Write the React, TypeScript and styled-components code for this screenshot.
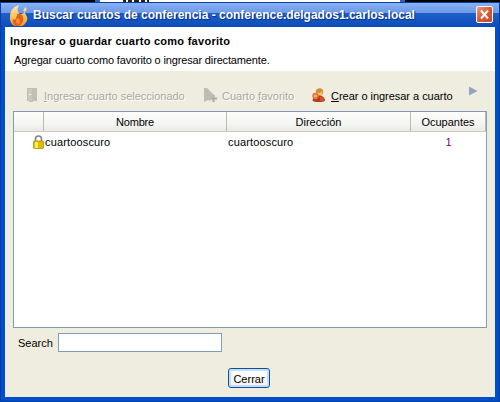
import React from 'react';
import styled, { createGlobalStyle } from 'styled-components';

const Global = createGlobalStyle`
  * { box-sizing: border-box; }
  body { margin: 0; overflow: hidden; font: 11px/14px "Liberation Sans", Arial, sans-serif; color: #000; }
`;

const Screen = styled.div`
  width: 500px;
  height: 402px;
  display: flex;
  flex-direction: column;
`;

const Behind = styled.div`
  height: 2px;
  flex: none;
  display: flex;
  background: #000;
`;
const BehindWindow = styled.div`
  margin-left: 95px;
  width: 310px;
  height: 2px;
  border: solid #2a5fc4;
  border-width: 0 5px;
  background: #fff;
  padding-left: 23px;
  display: flex;
  gap: 2px;
`;
const Speck = styled.i<{ $w: number }>`
  width: ${p => p.$w}px;
  height: 2px;
  background: #222;
`;

const Frame = styled.div`
  flex: 1;
  min-height: 0;
  display: flex;
  flex-direction: column;
  background: #004fc8;
  border: solid #003da5;
  border-width: 0 1px 1px;
  padding: 0 4px 4px;
`;

const TitleBar = styled.header`
  height: 25px;
  flex: none;
  margin: 0 -4px;
  padding: 0 6px 0 8px;
  display: flex;
  align-items: center;
  background: linear-gradient(#073f9c 0 1px, #8bb2f6 1px, #79a3ee 6px, #6f9ae3 11px, #1e5fc8 11px, #1758c4 17px, #0c4cb8 25px);
`;
const Title = styled.h1`
  margin: 0 0 0 4px;
  flex: 1;
  white-space: nowrap;
  font-size: 12px;
  line-height: 16px;
  font-weight: bold;
  letter-spacing: -0.003px;
  color: #fff;
  text-shadow: 1px 1px 1px #0a2f80;
`;
const CloseButton = styled.button`
  width: 17px;
  height: 17px;
  padding: 0;
  display: grid;
  place-items: center;
  border: 1px solid #fff;
  border-radius: 2px;
  background: linear-gradient(135deg, #ee9a80, #dc5a34 50%, #c64a28);
`;

const Heading = styled.section`
  height: 44px;
  flex: none;
  background: #fff;
  padding: 7px 0 0 5px;
`;
const HeadingTitle = styled.h2`
  margin: 0;
  font-size: 11px;
  line-height: 14px;
  letter-spacing: 0.27px;
`;
const HeadingText = styled.p`
  margin: 5px 0 0 4px;
  letter-spacing: -0.15px;
`;

const Body = styled.main`
  flex: 1;
  min-height: 0;
  display: flex;
  flex-direction: column;
  background: #efede0;
  padding: 0 8px;
`;

const Toolbar = styled.nav`
  height: 40px;
  flex: none;
  display: flex;
  align-items: center;
  padding: 9px 9px 0 11px;
`;
const ToolButton = styled.div<{ $disabled?: boolean; $width: number; $spacing: number }>`
  width: ${p => p.$width}px;
  display: flex;
  align-items: center;
  gap: 4px;
  white-space: nowrap;
  letter-spacing: ${p => p.$spacing}px;
  color: ${p => (p.$disabled ? '#aaa89c' : '#000')};
  text-shadow: ${p => (p.$disabled ? '1px 1px 0 #fff' : 'none')};
  svg { flex: none; }
`;
const More = styled.svg`
  margin: -9px 0 0 auto;
`;

const Table = styled.div`
  width: 474px;
  height: 217px;
  flex: none;
  border: 1px solid #7f9db9;
  background: #fff;
`;
const columns = '30px 183px 184px 75px';
const HeadRow = styled.div`
  display: grid;
  grid-template-columns: ${columns};
  height: 20px;
  background: linear-gradient(#fdfdfc, #f5f5f2 60%, #e9eae6);
  border-bottom: 1px solid #cfcabb;
`;
const HeadCell = styled.div<{ $spacing?: number }>`
  height: 19px;
  border-right: 1px solid #bdb9a8;
  text-align: center;
  line-height: 21px;
  letter-spacing: ${p => p.$spacing ?? 0}px;
`;
const Row = styled.div`
  display: grid;
  grid-template-columns: ${columns};
  align-items: center;
  height: 20px;
`;
const Cell = styled.div`
  padding-left: 1px;
  line-height: 14px;
  margin-top: -1px;
  letter-spacing: 0.15px;
`;
const LockCell = styled.div`
  display: flex;
  justify-content: flex-end;
`;
const Count = styled.div`
  margin-top: -1px;
  text-align: center;
  color: #800080;
`;

const SearchRow = styled.label`
  display: flex;
  align-items: center;
  gap: 5px;
  margin-top: 5px;
  padding-left: 5px;
`;
const SearchLabel = styled.span`
  width: 35px;
`;
const SearchInput = styled.input`
  width: 164px;
  height: 19px;
  border: 1px solid #7f9db9;
  background: #fff;
  outline: none;
`;
const Footer = styled.footer`
  display: flex;
  justify-content: center;
  margin: 16px 2px 0 0;
`;
const DialogButton = styled.button`
  width: 42px;
  height: 20px;
  padding: 1px 0 0;
  border: 1px solid #0054a6;
  border-radius: 3px;
  background: linear-gradient(#fff, #f4f3ef);
  box-shadow: inset 0 0 0 2px #cbdcf5;
  font: 11px/14px "Liberation Sans", Arial, sans-serif;
  color: #000;
`;

const Flame = () => (
  <svg width="20" height="22" viewBox="0 0 20 22">
    <defs>
      <linearGradient id="flame" x2="0" y2="1">
        <stop stopColor="#ffe9b0" />
        <stop offset=".5" stopColor="#ffc75a" />
        <stop offset="1" stopColor="#f79a2c" />
      </linearGradient>
    </defs>
    <path d="M10 1C3 3 1 8 1 14c0 4 2 7 5 8h7c4-2 6-6 5-9-1-2-2-3-2-5-2 1-3 3-5 2-3-2-3-5-1-9z" fill="url(#flame)" />
    <path d="M16.500 3c2 2 1 4-1 5-2-1-1-3 1-5z" fill="#ffd88a" />
    <path d="M8 10c5-1 7 3 6 7-1 3-3 5-6 5s-5-3-4-7c1 1 3 1 3-1s2-2 1-4z" fill="#e4611b" />
    <path d="M8 14c3 1 4 3 2 6-3 0-4-3-2-6z" fill="#f58a35" />
  </svg>
);
const Cross = () => (
  <svg width="11" height="11" viewBox="0 0 11 11">
    <path d="M2 1.500l7 8M9 1.500l-7 8" stroke="#fff" strokeWidth="2" />
  </svg>
);
const Door = () => (
  <svg width="16" height="16" viewBox="0 0 16 16">
    <path d="M3 0h10v13H9v1H5v-1H3z" fill="#bfbfb8" />
    <path d="M4 1h4v12H4z" fill="#c9c9c3" />
    <path d="M5 6h2v1H5z" fill="#f2f2ee" />
  </svg>
);
const Bookmark = () => (
  <svg width="16" height="16" viewBox="0 0 16 16">
    <path d="M2 0h3l7 7-4 6-2-1-4 2z" fill="#bdbdb7" />
    <path d="M10.500 7h2v2.500H15v2h-2.500V14h-2v-2.500H8v-2h2.500z" fill="#adada7" stroke="#c5c5be" strokeWidth=".6" />
  </svg>
);
const Person = () => (
  <svg width="16" height="16" viewBox="0 0 16 16">
    <circle cx="8.500" cy="4" r="3.700" fill="#d98c2e" />
    <path d="M6 4.500c2 1 4 0 5-1 1 3-1 5-3 5s-2-2-2-4z" fill="#f6c878" />
    <path d="M1.500 12.500C2 8.500 5 7.500 8 7.500s6 2 6 5c-1 2-11.500 2-12.500 0z" fill="#b83a1c" />
    <path d="M9 8.500l4 2-1 3-3-1z" fill="#cf5734" />
    <circle cx="4.500" cy="8" r="3.200" fill="#ee6a35" />
    <circle cx="4.500" cy="8" r="1.600" fill="#ffc070" />
  </svg>
);
const Lock = () => (
  <svg width="11" height="14" viewBox="0 0 11 14">
    <path d="M2.500 7V4a3 3 0 0 1 6 0v3" fill="none" stroke="#858585" strokeWidth="1.600" />
    <rect x=".5" y="6" width="10" height="7.500" rx="1" fill="#e3b800" stroke="#a98108" strokeWidth=".7" />
    <path d="M2 7h3v6H2z" fill="#fff04a" />
  </svg>
);

export default function App() {
  return (
    <>
      <Global />
      <Screen>
        <Behind>
          <BehindWindow><Speck $w={3} /><Speck $w={4} /><Speck $w={5} /><Speck $w={4} /><Speck $w={2} /></BehindWindow>
        </Behind>
        <Frame>
          <TitleBar>
            <Flame />
            <Title>Buscar cuartos de conferencia - conference.delgados1.carlos.local</Title>
            <CloseButton aria-label="Cerrar ventana"><Cross /></CloseButton>
          </TitleBar>
          <Heading>
            <HeadingTitle>Ingresar o guardar cuarto como favorito</HeadingTitle>
            <HeadingText>Agregar cuarto como favorito o ingresar directamente.</HeadingText>
          </Heading>
          <Body>
            <Toolbar>
              <ToolButton $disabled $width={178} $spacing={-0.02}><Door /><span><u>I</u>ngresar cuarto seleccionado</span></ToolButton>
              <ToolButton $disabled $width={109} $spacing={0}><Bookmark /><span>Cuarto <u>f</u>avorito</span></ToolButton>
              <ToolButton $width={144} $spacing={-0.03}><Person /><span><u>C</u>rear o ingresar a cuarto</span></ToolButton>
              <More width="9" height="10" viewBox="0 0 9 10"><path d="M0 0.500L8.500 5 0 9.500z" fill="#93a3bf" /></More>
            </Toolbar>
            <Table>
              <HeadRow>
                <HeadCell />
                <HeadCell $spacing={-0.2}>Nombre</HeadCell>
                <HeadCell>Dirección</HeadCell>
                <HeadCell>Ocupantes</HeadCell>
              </HeadRow>
              <Row>
                <LockCell><Lock /></LockCell>
                <Cell>cuartooscuro</Cell>
                <Cell>cuartooscuro</Cell>
                <Count>1</Count>
              </Row>
            </Table>
            <SearchRow>
              <SearchLabel>Search</SearchLabel>
              <SearchInput />
            </SearchRow>
            <Footer><DialogButton>Cerrar</DialogButton></Footer>
          </Body>
        </Frame>
      </Screen>
    </>
  );
}
